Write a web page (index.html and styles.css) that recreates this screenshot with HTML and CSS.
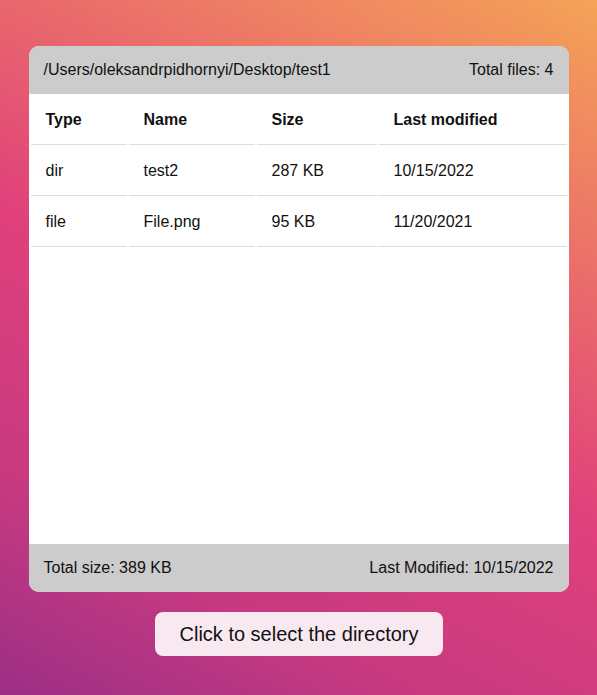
FILE: index.html
```html
<!DOCTYPE html>
<html>
<head>
<meta charset="utf-8">
<link rel="stylesheet" href="styles.css">
</head>
<body>
<main class="page">
  <section class="card">
    <header class="bar">
      <span>/Users/oleksandrpidhornyi/Desktop/test1</span>
      <span>Total files: 4</span>
    </header>
    <div class="body">
      <table class="files">
        <thead>
          <tr><th class="c1">Type</th><th class="c2">Name</th><th class="c3">Size</th><th class="c4">Last modified</th></tr>
        </thead>
        <tbody>
          <tr><td>dir</td><td>test2</td><td>287 KB</td><td>10/15/2022</td></tr>
          <tr><td>file</td><td>File.png</td><td>95 KB</td><td>11/20/2021</td></tr>
        </tbody>
      </table>
    </div>
    <footer class="bar">
      <span>Total size: 389 KB</span>
      <span>Last Modified: 10/15/2022</span>
    </footer>
  </section>
  <button class="select">Click to select the directory</button>
</main>
</body>
</html>
```
FILE: styles.css
```css
html, body {
  margin: 0;
  height: 100%;
}
body {
  font-family: "Liberation Sans", Arial, sans-serif;
  color: #111;
  background: linear-gradient(28deg, #9c2f86 0%, #c83a80 22%, #e0407b 48%, #ea6d6a 72%, #f5a357 100%);
}
.page {
  display: flex;
  flex-direction: column;
  align-items: center;
  padding-top: 46px;
}
.card {
  width: 540px;
  border-radius: 10px;
  overflow: hidden;
  background: #fff;
}
.bar {
  display: flex;
  justify-content: space-between;
  background: #cccccc;
  padding: 15px 15px;
  font-size: 16px;
  line-height: 18px;
}
.body {
  height: 450px;
}
.files {
  width: 100%;
  border-spacing: 2px;
  font-size: 16px;
  line-height: 18px;
}
.files th, .files td {
  text-align: left;
  padding: 15px 15px;
  border-bottom: 1px solid #dddddd;
}
.files th { font-weight: bold; }
.c1 { width: 66px; }
.c2 { width: 96px; }
.c3 { width: 90px; }
.select {
  margin-top: 20px;
  background: #f8e9f1;
  border: none;
  border-radius: 8px;
  font-family: "Liberation Sans", Arial, sans-serif;
  font-size: 20px;
  line-height: 23px;
  color: #111;
  padding: 11px 21px 10px 22px;
  width: 288px;
}
```
